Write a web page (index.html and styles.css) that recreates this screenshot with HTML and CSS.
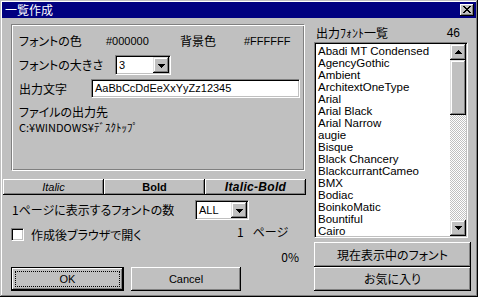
FILE: index.html
```html
<!DOCTYPE html>
<html lang="ja">
<head>
<meta charset="utf-8">
<title>一覧作成</title>
<link rel="stylesheet" href="styles.css">
</head>
<body>
<div class="window">
  <div class="titlebar">
    <span class="title">一覧作成</span>
    <span class="close">
      <svg width="8" height="7" viewBox="0 0 8 7" shape-rendering="crispEdges"><path d="M0 0h2v1h-2zM6 0h2v1h-2zM1 1h2v1h-2zM5 1h2v1h-2zM2 2h4v1h-4zM3 3h2v1h-2zM2 4h4v1h-4zM1 5h2v1h-2zM5 5h2v1h-2zM0 6h2v1h-2zM6 6h2v1h-2z"/></svg>
    </span>
  </div>
  <div class="content">
    <div class="left">
      <div class="panel">
        <div class="row r1">
          <span>フォントの色</span>
          <span class="lt">#000000</span>
          <span>背景色</span>
          <span class="lt">#FFFFFF</span>
        </div>
        <div class="row r2">
          <span class="lab-size">フォントの大きさ</span>
          <div class="combo combo-size">
            <span class="combo-val lt">3</span>
            <span class="drop"><svg width="7" height="4" viewBox="0 0 7 4" shape-rendering="crispEdges"><path d="M0 0h7v1h-7zM1 1h5v1h-5zM2 2h3v1h-3zM3 3h1v1h-1z"/></svg></span>
          </div>
        </div>
        <div class="row r3">
          <span class="lab-text">出力文字</span>
          <div class="field lt">AaBbCcDdEeXxYyZz12345</div>
        </div>
        <div class="row r4">ファイルの出力先</div>
        <div class="row r5">C:¥WINDOWS¥ﾃﾞｽｸﾄｯﾌﾟ</div>
      </div>
      <div class="style-row">
        <div class="btn style-btn s-italic">Italic</div>
        <div class="btn style-btn s-bold">Bold</div>
        <div class="btn style-btn s-bi">Italic-Bold</div>
      </div>
      <div class="count-row">
        <span class="count-label">1ページに表示するフォントの数</span>
        <div class="combo combo-all">
          <span class="combo-val lt">ALL</span>
          <span class="drop"><svg width="7" height="4" viewBox="0 0 7 4" shape-rendering="crispEdges"><path d="M0 0h7v1h-7zM1 1h5v1h-5zM2 2h3v1h-3zM3 3h1v1h-1z"/></svg></span>
        </div>
      </div>
      <div class="check-row">
        <span class="checkbox"></span>
        <span class="check-label">作成後ブラウザで開く</span>
        <span class="page"><span class="page-num">1</span>ページ</span>
      </div>
      <div class="pct-row">0%</div>
      <div class="btn-row">
        <div class="btn ok"><span class="focus lt">OK</span></div>
        <div class="btn cancel lt">Cancel</div>
      </div>
    </div>
    <div class="right">
      <div class="list-head"><span>出力ﾌｫﾝﾄ一覧</span><span class="lt count">46</span></div>
      <div class="listbox">
        <div class="items lt">
          <div class="item">Abadi MT Condensed</div>
          <div class="item">AgencyGothic</div>
          <div class="item">Ambient</div>
          <div class="item">ArchitextOneType</div>
          <div class="item">Arial</div>
          <div class="item">Arial Black</div>
          <div class="item">Arial Narrow</div>
          <div class="item">augie</div>
          <div class="item">Bisque</div>
          <div class="item">Black Chancery</div>
          <div class="item">BlackcurrantCameo</div>
          <div class="item">BMX</div>
          <div class="item">Bodiac</div>
          <div class="item">BoinkoMatic</div>
          <div class="item">Bountiful</div>
          <div class="item">Cairo</div>
        </div>
        <div class="vscroll">
          <div class="sb-btn"><svg width="7" height="4" viewBox="0 0 7 4" shape-rendering="crispEdges"><path d="M3 0h1v1h-1zM2 1h3v1h-3zM1 2h5v1h-5zM0 3h7v1h-7z"/></svg></div>
          <div class="sb-thumb"></div>
          <div class="sb-track"></div>
          <div class="sb-btn"><svg width="7" height="4" viewBox="0 0 7 4" shape-rendering="crispEdges"><path d="M0 0h7v1h-7zM1 1h5v1h-5zM2 2h3v1h-3zM3 3h1v1h-1z"/></svg></div>
        </div>
      </div>
      <div class="btn wide-btn wide-1">現在表示中のフォント</div>
      <div class="btn wide-btn wide-2">お気に入り</div>
    </div>
  </div>
</div>
</body>
</html>
```

FILE: styles.css
```css
* { box-sizing: border-box; margin: 0; padding: 0; }
html, body { width: 478px; height: 297px; overflow: hidden; background: #c0c0c0; }
body {
  font-family: "Noto Sans CJK JP", sans-serif;
  font-size: 12px;
  line-height: 12px;
  color: #000;
  font-feature-settings: "palt";
}
.lt {
  font-family: "Liberation Sans", "Noto Sans CJK JP", sans-serif;
  font-size: 11px;
  font-feature-settings: normal;
}
svg { display: block; fill: #000; }

.window {
  width: 478px; height: 297px;
  background: #c0c0c0;
  padding: 2px;
  box-shadow: inset -1px -1px #000, inset 1px 1px #c0c0c0, inset -2px -2px #808080, inset 2px 2px #fff;
  display: flex; flex-direction: column;
}
.titlebar {
  height: 16px; flex: none;
  background: #000080; color: #fff;
  display: flex; align-items: center; justify-content: space-between;
  padding: 0 2px 0 3px;
}
.title { line-height: 16px; font-weight: 400; }
.close {
  width: 14px; height: 12px;
  background: #c0c0c0;
  box-shadow: inset -1px -1px #000, inset 1px 1px #fff, inset -2px -2px #808080;
  display: flex; align-items: center; justify-content: center;
  padding: 0 1px 1px 0;
}

.content { flex: 1; display: flex; }
.left { width: 303px; margin-left: 1px; display: flex; flex-direction: column; }
.right { width: 157px; margin-left: 8px; display: flex; flex-direction: column; }

.btn {
  background: #c0c0c0;
  box-shadow: inset -1px -1px #000, inset 1px 1px #fff, inset -2px -2px #808080;
  display: flex; align-items: center; justify-content: center;
}

/* panel */
.panel {
  margin: 6px 0 0 8px;
  width: 294px; height: 147px;
  border: 1px solid;
  border-color: #808080 #fff #fff #808080;
  box-shadow: inset 1px 1px #fff, inset -1px -1px #808080;
  padding: 10px 0 0 7px;
}
.row { display: flex; align-items: center; }
.r1 { height: 12px; display: grid; grid-template-columns: 87px 74px 64px auto; }
.r2 { height: 20px; margin-top: 8px; }
.r3 { height: 19px; margin-top: 4px; }
.r4 { height: 12px; margin-top: 8px; }
.r5 { height: 11px; margin-top: 4px; font-size: 11px; line-height: 11px; font-feature-settings: normal; }
.lab-size { width: 96px; }
.lab-text { width: 72px; }

.combo, .field, .listbox, .checkbox {
  background: #fff;
  border: 1px solid;
  border-color: #808080 #fff #fff #808080;
  box-shadow: inset 1px 1px #000, inset -1px -1px #c0c0c0;
  padding: 1px;
}
.combo { display: flex; align-items: center; height: 20px; }
.combo-size { width: 56px; }
.combo-val { flex: 1; padding-left: 2px; line-height: 16px; }
.drop {
  width: 16px; height: 16px;
  background: #c0c0c0;
  box-shadow: inset -1px -1px #000, inset 1px 1px #dfdfdf, inset -2px -2px #808080, inset 2px 2px #fff;
  display: flex; align-items: center; justify-content: center;
  padding-top: 1px;
}
.field { width: 209px; height: 19px; padding-left: 3px; line-height: 15px; }

/* style buttons */
.style-row { display: flex; height: 16px; margin-top: 8px; }
.style-btn { width: 101px; height: 16px; font-family: "Liberation Sans", sans-serif; font-size: 11px; font-feature-settings: normal; }
.s-italic { font-style: italic; }
.s-bold { font-weight: bold; }
.s-bi { font-weight: bold; font-style: italic; font-size: 12px; letter-spacing: 0.3px; }

.count-row { display: flex; align-items: center; height: 20px; margin-top: 5px; padding-left: 9px; }
.count-label { width: 183px; }
.combo-all { width: 54px; }

.check-row { display: flex; align-items: center; height: 13px; margin-top: 8px; padding-left: 8px; }
.checkbox { width: 13px; height: 13px; }
.check-label { width: 206px; margin-left: 7px; }
.page { align-self: flex-start; margin-top: -2px; }
.page-num { margin-right: 9px; }

.pct-row { height: 12px; margin-top: 10px; text-align: right; padding-right: 7px; }

.btn-row { display: flex; height: 24px; margin-top: 4px; padding-left: 8px; }
.ok { width: 113px; border: 1px solid #000; padding: 3px; }
.focus { flex: 1; align-self: stretch; border: 1px dotted #000; display: flex; align-items: center; justify-content: center; }
.cancel { width: 110px; margin-left: 7px; }

/* right column */
.list-head { height: 12px; margin-top: 9px; display: flex; justify-content: space-between; padding: 0 11px 0 2px; }
.count { font-size: 12px; line-height: 12px; }
.listbox { width: 154px; height: 196px; margin-top: 3px; display: flex; overflow: hidden; }
.items { flex: 1; padding: 1px 0 0 2px; overflow: hidden; font-size: 11.5px; }
.item { height: 12px; line-height: 12px; white-space: nowrap; }
.vscroll { width: 16px; display: flex; flex-direction: column; }
.sb-btn, .sb-thumb {
  background: #c0c0c0;
  box-shadow: inset -1px -1px #000, inset 1px 1px #dfdfdf, inset -2px -2px #808080, inset 2px 2px #fff;
}
.sb-btn { height: 16px; display: flex; align-items: center; justify-content: center; }
.sb-thumb { height: 55px; }
.sb-track {
  flex: 1;
  background: repeating-conic-gradient(#c0c0c0 0% 25%, #fff 0% 50%) 0 0 / 2px 2px;
}
.wide-btn { height: 24px; }
.wide-1 { margin-top: 4px; height: 25px; }
```
